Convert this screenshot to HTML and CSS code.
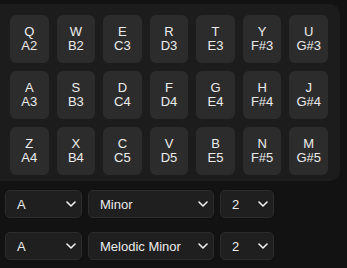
FILE: index.html
```html
<!DOCTYPE html>
<html>
<head>
<meta charset="utf-8">
<link rel="stylesheet" href="styles.css">
</head>
<body>
<div class="panel">
  <div class="keys">
    <div class="key"><span>Q</span><span>A2</span></div>
    <div class="key"><span>W</span><span>B2</span></div>
    <div class="key"><span>E</span><span>C3</span></div>
    <div class="key"><span>R</span><span>D3</span></div>
    <div class="key"><span>T</span><span>E3</span></div>
    <div class="key"><span>Y</span><span>F#3</span></div>
    <div class="key"><span>U</span><span>G#3</span></div>
    <div class="key"><span>A</span><span>A3</span></div>
    <div class="key"><span>S</span><span>B3</span></div>
    <div class="key"><span>D</span><span>C4</span></div>
    <div class="key"><span>F</span><span>D4</span></div>
    <div class="key"><span>G</span><span>E4</span></div>
    <div class="key"><span>H</span><span>F#4</span></div>
    <div class="key"><span>J</span><span>G#4</span></div>
    <div class="key"><span>Z</span><span>A4</span></div>
    <div class="key"><span>X</span><span>B4</span></div>
    <div class="key"><span>C</span><span>C5</span></div>
    <div class="key"><span>V</span><span>D5</span></div>
    <div class="key"><span>B</span><span>E5</span></div>
    <div class="key"><span>N</span><span>F#5</span></div>
    <div class="key"><span>M</span><span>G#5</span></div>
  </div>
</div>
<div class="controls">
  <div class="row">
    <div class="select s-root"><span>A</span><svg class="chev" width="10" height="6" viewBox="0 0 10 6"><path d="M1 1 L5 5 L9 1" fill="none" stroke="#f0f0f0" stroke-width="1.6" stroke-linecap="round" stroke-linejoin="round"/></svg></div>
    <div class="select s-scale"><span>Minor</span><svg class="chev" width="10" height="6" viewBox="0 0 10 6"><path d="M1 1 L5 5 L9 1" fill="none" stroke="#f0f0f0" stroke-width="1.6" stroke-linecap="round" stroke-linejoin="round"/></svg></div>
    <div class="select s-oct"><span>2</span><svg class="chev" width="10" height="6" viewBox="0 0 10 6"><path d="M1 1 L5 5 L9 1" fill="none" stroke="#f0f0f0" stroke-width="1.6" stroke-linecap="round" stroke-linejoin="round"/></svg></div>
  </div>
  <div class="row">
    <div class="select s-root"><span>A</span><svg class="chev" width="10" height="6" viewBox="0 0 10 6"><path d="M1 1 L5 5 L9 1" fill="none" stroke="#f0f0f0" stroke-width="1.6" stroke-linecap="round" stroke-linejoin="round"/></svg></div>
    <div class="select s-scale"><span>Melodic Minor</span><svg class="chev" width="10" height="6" viewBox="0 0 10 6"><path d="M1 1 L5 5 L9 1" fill="none" stroke="#f0f0f0" stroke-width="1.6" stroke-linecap="round" stroke-linejoin="round"/></svg></div>
    <div class="select s-oct"><span>2</span><svg class="chev" width="10" height="6" viewBox="0 0 10 6"><path d="M1 1 L5 5 L9 1" fill="none" stroke="#f0f0f0" stroke-width="1.6" stroke-linecap="round" stroke-linejoin="round"/></svg></div>
  </div>
</div>
</body>
</html>
```
FILE: styles.css
```css
html, body {
  margin: 0;
  padding: 0;
  background: #121212;
  color: #ececec;
  font-family: "Liberation Sans", Arial, sans-serif;
  font-size: 13px;
}
.panel {
  margin: 4px 7px 0 0;
  background: #1c1c1c;
  border-radius: 0 10px 10px 0;
  padding: 11px 12px 6px 10px;
}
.keys {
  display: grid;
  grid-template-columns: repeat(7, 1fr);
  grid-auto-rows: 48px;
  gap: 8px;
}
.key {
  background: #2c2c2c;
  border-radius: 6px;
  display: flex;
  flex-direction: column;
  align-items: center;
  justify-content: center;
  line-height: 14px;
}
.controls {
  padding: 9px 0 0 5px;
  display: flex;
  flex-direction: column;
  gap: 14px;
}
.row {
  display: flex;
  gap: 6px;
}
.select {
  box-sizing: border-box;
  height: 28px;
  background: #1f1f1f;
  border: 1px solid #2c2c2c;
  border-radius: 5px;
  display: flex;
  align-items: center;
  justify-content: space-between;
  padding: 0 5px 0 11px;
  font-size: 13px;
}
.s-root { width: 77px; }
.s-scale { width: 126px; }
.s-oct { width: 54px; }
.chev { display: block; }
```
